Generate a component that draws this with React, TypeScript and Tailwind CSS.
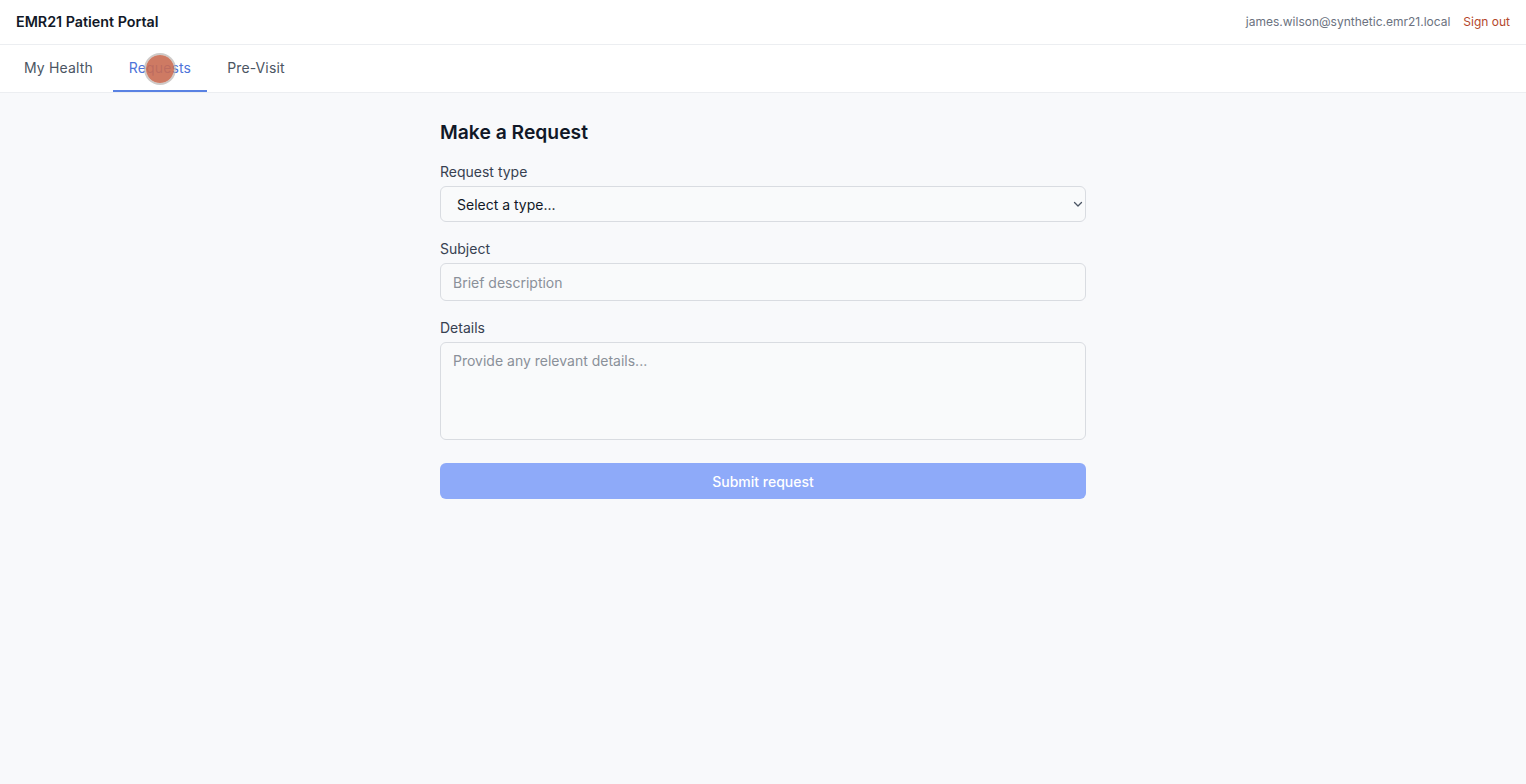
import React, { useState } from "react";

const tabs = ["My Health", "Requests", "Pre-Visit"];

export default function App() {
    const [active, setActive] = useState("Requests");
    const [type, setType] = useState("");
    const [subject, setSubject] = useState("");
    const [details, setDetails] = useState("");
    const ready = type !== "" && subject.trim().length > 0;

    return <div className="min-h-screen bg-[#f8f9fb] text-[#111827]" style={{ fontFamily: "Inter, 'Noto Sans', sans-serif" }}>
        <header className="h-[45px] bg-white border-b border-[#eceef1] flex items-center justify-between pl-4 pr-4">
            <p className="text-[14.3px] font-semibold text-[#111827]">EMR21 Patient Portal</p>
            <div className="flex items-center gap-[13px] text-[12px]">
                <span className="text-[#6b7280]">james.wilson@synthetic.emr21.local</span>
                <button className="text-[#b4472c]">Sign out</button>
            </div>
        </header>
        <nav className="h-[48px] bg-white border-b border-[#eceef1] flex gap-1 px-2">
            {tabs.map((t) => <button key={t} onClick={() => setActive(t)}
                className={`relative px-4 text-[14px] tracking-[0.01em] border-b-2 ${active === t ? "text-[#4d74d9] border-[#5a82e3]" : "text-[#4b5563] border-transparent"}`}>
                {t}
                {t === "Requests" ?
                    <span className="absolute left-[33px] top-[10px] w-[28px] h-[28px] rounded-full bg-[#c96b52]/90 ring-2 ring-[#b9b4b0]/70"></span>
                : null}
            </button>)}
        </nav>
        <main className="w-[646px] mx-auto pt-[25px]">
            <h1 className="text-[19.3px] leading-7 font-semibold mb-4">Make a Request</h1>
            <label className="block text-[14px] leading-5 text-[#374151] mb-1">Request type</label>
            <div className="relative">
                <select value={type} onChange={(e) => setType(e.target.value)}
                    className="appearance-none w-full h-9 rounded-md border border-[#d9dce1] bg-[#f9fafb] pl-4 pr-8 text-[14px] text-[#111827] outline-none">
                    <option value="">Select a type...</option>
                    <option value="refill">Prescription refill</option>
                    <option value="appointment">Appointment</option>
                    <option value="question">Question for my care team</option>
                </select>
                <svg className="absolute right-[2px] top-[12px] pointer-events-none" width="12" height="12" viewBox="0 0 12 12" fill="none">
                    <path d="M2.5 4.5 6 8l3.5-3.5" stroke="#4b5563" strokeWidth="1.3" strokeLinecap="round" strokeLinejoin="round" />
                </svg>
            </div>
            <label className="block text-[14px] leading-5 text-[#374151] mt-[17px] mb-1">Subject</label>
            <input value={subject} onChange={(e) => setSubject(e.target.value)} placeholder="Brief description"
                className="w-full h-[38px] rounded-md border border-[#d9dce1] bg-[#f9fafb] px-3 text-[14px] placeholder:text-[#8a9099] outline-none" />
            <label className="block text-[14px] leading-5 text-[#374151] mt-[17px] mb-1">Details</label>
            <textarea value={details} onChange={(e) => setDetails(e.target.value)} placeholder="Provide any relevant details..."
                className="block w-full h-[98px] resize-none rounded-md border border-[#d9dce1] bg-[#f9fafb] px-3 py-2 text-[14px] leading-5 placeholder:text-[#8a9099] outline-none" />
            <button disabled={!ready}
                className="mt-[23px] w-full h-[36px] rounded-md bg-[#8eaaf9] text-white text-[14px] font-medium">
                Submit request
            </button>
        </main>
    </div>
}
